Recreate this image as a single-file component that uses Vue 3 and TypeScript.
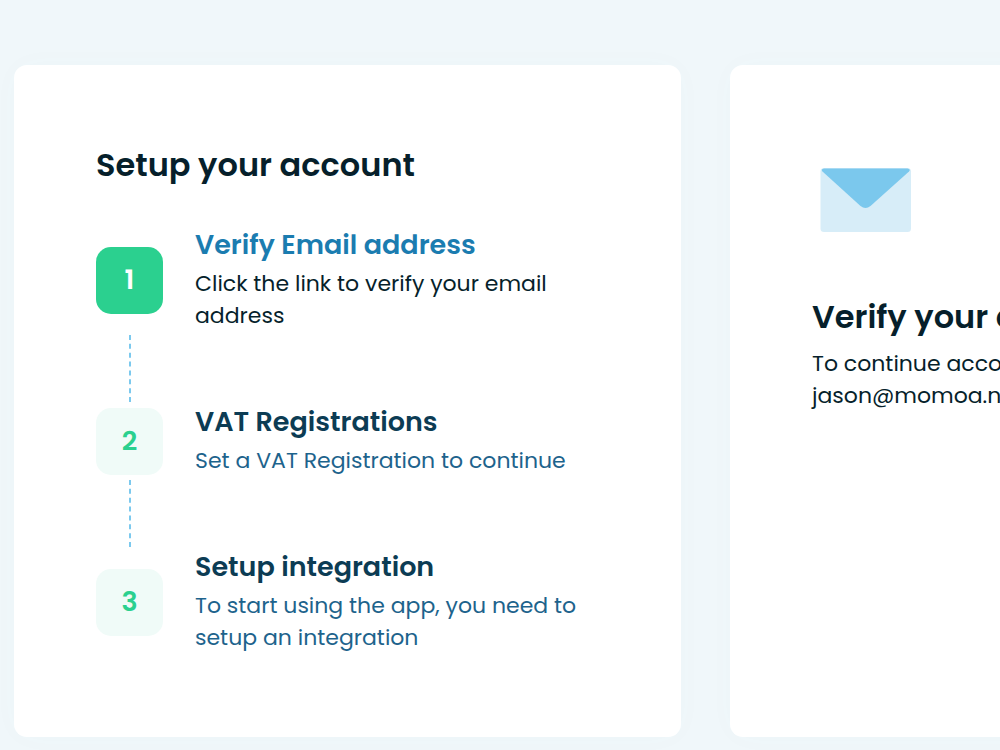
<script setup lang="ts">
interface Step {
  title: string
  text: string
  active: boolean
}

const steps: Step[] = [
  { title: 'Verify Email address', text: 'Click the link to verify your email address', active: true },
  { title: 'VAT Registrations', text: 'Set a VAT Registration to continue', active: false },
  { title: 'Setup integration', text: 'To start using the app, you need to setup an integration', active: false },
]
</script>

<template>
  <main class="page">
    <section class="card">
      <h1 class="heading">Setup your account</h1>
      <ol class="steps">
        <li v-for="(step, i) in steps" :key="step.title" class="step" :class="{ active: step.active }">
          <div class="row">
            <span class="badge">{{ i + 1 }}</span>
            <div class="body">
              <h2 class="title">{{ step.title }}</h2>
              <p class="text">{{ step.text }}</p>
            </div>
          </div>
          <svg v-if="i < steps.length - 1" class="connector" viewBox="0 0 2 67" aria-hidden="true">
            <line x1="1" y1="0" x2="1" y2="67" stroke="#7cc9ee" stroke-width="2" stroke-dasharray="5 3.86" />
          </svg>
        </li>
      </ol>
    </section>

    <section class="card side">
      <svg class="mail" viewBox="0 0 108 108" aria-hidden="true">
        <rect x="8.5" y="23" width="90.5" height="64" rx="3.5" fill="#d7edf8" />
        <path
          d="M12 23.5H95.500Q99 24 97 26.500L58.500 61Q53.500 65 48.500 61L10.500 26.500Q8.500 24 12 23.500Z"
          fill="#7bc8ed"
        />
      </svg>
      <h2 class="heading">Verify your email</h2>
      <p class="text">To continue account<br />jason@momoa.nl</p>
    </section>
  </main>
</template>

<style>
body {
  margin: 0;
  background: #f0f7fa;
}
</style>

<style scoped>
.page {
  box-sizing: border-box;
  min-height: 100vh;
  padding: 65px 0 13px 14px;
  display: grid;
  grid-template-columns: minmax(0, 1fr) 270px;
  gap: 49px;
  overflow: hidden;
  background: #f0f7fa;
  font-family: Poppins, Inter, "Open Sans", sans-serif;
  color: #061f2b;
}

.card {
  box-sizing: border-box;
  padding: 80px 82px 83px;
  border-radius: 13px;
  background: #fff;
  box-shadow: 0 0 32px rgba(20, 130, 130, 0.02);
}

.side {
  width: 667px;
}

.heading {
  margin: 0;
  font-size: 32px;
  line-height: 40px;
  font-weight: 600;
}

.steps {
  margin: 44px 0 0;
  padding: 0;
  list-style: none;
}

.row {
  display: flex;
  align-items: center;
  gap: 32px;
}

.badge {
  flex: none;
  width: 67px;
  height: 67px;
  border-radius: 15px;
  background: #f0fbf8;
  color: #2bd08f;
  font-size: 27px;
  font-weight: 600;
  line-height: 66px;
  text-align: center;
}

.active .badge {
  background: #2bd08f;
  color: #fff;
}

.body {
  flex: 1;
  min-width: 0;
}

.title {
  margin: 0 0 8px;
  font-size: 27px;
  line-height: 31px;
  font-weight: 600;
  color: #0c3c54;
}

.active .title {
  color: #1b7cb0;
}

.text {
  margin: 0;
  font-size: 22px;
  line-height: 32px;
  font-weight: 400;
  color: #1d638c;
}

.active .text,
.side .text {
  color: #061f2b;
}

.side .text,
.side .heading {
  white-space: nowrap;
}

.connector {
  display: block;
  width: 2px;
  height: 67px;
  margin: 3px 0 4px 33px;
}

.mail {
  display: block;
  width: 108px;
  height: 108px;
}

.side .heading {
  margin: 44px 0 11px;
}
</style>
